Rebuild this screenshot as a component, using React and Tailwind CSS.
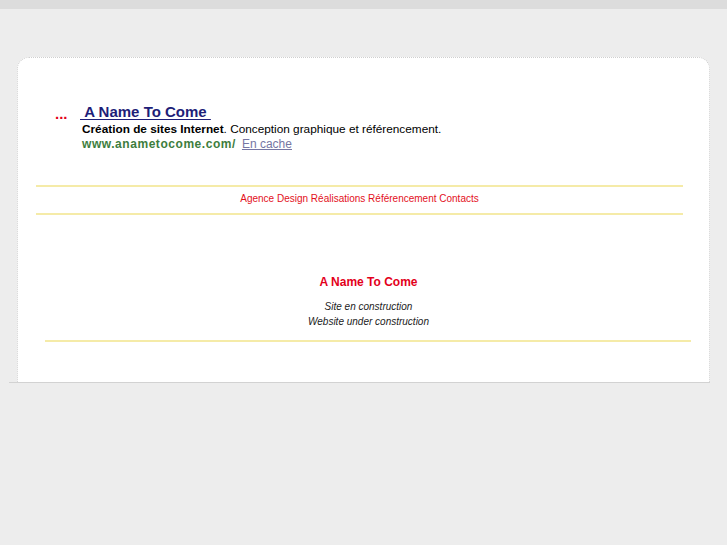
import React from 'react';

export default function App() {
  const menu = ['Agence', 'Design', 'Réalisations', 'Référencement', 'Contacts'];

  return (
    <div className="min-h-[545px] bg-[#ededed] font-['Liberation_Sans',Arial,sans-serif]">
      {/* top strip */}
      <div className="h-[9px] bg-[#dcdcdc]" />

      <div className="pt-[48px]">
        {/* main card */}
        <div className="ml-[17px] w-[693px] h-[325px] bg-white rounded-t-[12px] border border-b-0 border-dotted border-[#cfcfcf] flex flex-col">
          {/* search result block */}
          <div className="mt-[44px] ml-[37px] flex">
            <span className="text-[#e3001b] font-bold text-[15px] leading-[20px] pt-[2px] w-[27px]">...</span>
            <div className="flex flex-col">
              <a className="text-[#1e1e78] font-bold text-[15px] leading-[20px] underline underline-offset-[2px] -ml-[2px]">
                &nbsp;A Name To Come&nbsp;
              </a>
              <p className="text-[11.8px] leading-[15px] text-black">
                <span className="font-bold">Création de sites Internet</span>. Conception graphique et référencement.
              </p>
              <p className="text-[12px] leading-[15px]">
                <span className="font-bold text-[#3d7d3d] tracking-[0.55px]">www.anametocome.com/</span>
                <span className="ml-[6px] text-[#7676a3] underline">En cache</span>
              </p>
            </div>
          </div>

          {/* menu */}
          <div className="mt-[33px] ml-[18px] w-[647px] flex flex-col">
            <div className="h-[2px] bg-[#f5eba8]" />
            <div className="h-[26px] flex items-center justify-center pb-[2px]">
              <nav className="text-[#e3101c] text-[10px] leading-[12px]">
                {menu.join(' ')}
              </nav>
            </div>
            <div className="h-[2px] bg-[#f5eba8]" />
          </div>

          {/* construction notice */}
          <div className="flex flex-col items-center ml-[18px] w-[665px]">
            <h1 className="mt-[60px] text-[#e3001b] font-bold text-[12px] leading-[15px]">A Name To Come</h1>
            <p className="mt-[9px] italic text-[10px] leading-[15px] text-[#222]">Site en construction</p>
            <p className="mt-0 italic text-[10px] leading-[15px] text-[#222]">Website under construction</p>
          </div>

          <div className="mt-[11px] ml-[27px] w-[646px] h-[2px] bg-[#f5eba8]" />
        </div>
        <div className="ml-[9px] w-[701px] h-px bg-[#d2d2d2]" />
      </div>
    </div>
  );
}
